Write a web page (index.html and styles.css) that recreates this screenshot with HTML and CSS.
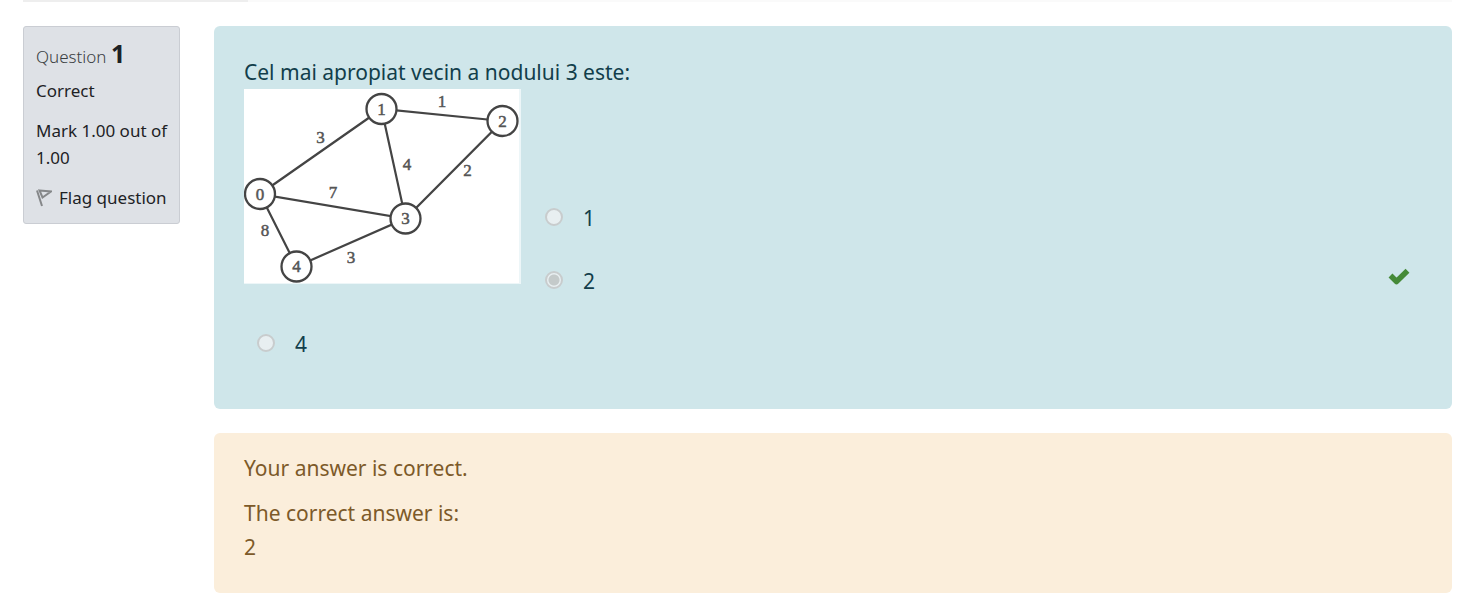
FILE: index.html
```html
<!DOCTYPE html>
<html lang="en">
<head>
<meta charset="utf-8">
<meta name="viewport" content="width=device-width, initial-scale=1">
<title>Quiz review</title>
<link rel="stylesheet" href="styles.css">
</head>
<body>
<div class="summary-edge"><div class="summary-label"></div></div>
<main class="question">
  <aside class="info">
    <h3 class="info-title">Question <span class="info-number">1</span></h3>
    <div class="info-state">Correct</div>
    <div class="info-grade">Mark 1.00 out of 1.00</div>
    <a class="info-flag" href="#flag">
      <svg class="flag-icon" viewBox="0 0 16 18" aria-hidden="true"><path d="M1 1.5 L6 17 M3.5 1.5 L15 2.5 L6.5 8.5 Z"/></svg>
      <span>Flag question</span>
    </a>
  </aside>
  <div class="content">
    <section class="formulation">
      <div class="prompt" id="prompt">Cel mai apropiat vecin a nodului 3 este:</div>
      <svg class="graph" viewBox="0 0 277 195" role="img" aria-label="Weighted graph with five nodes">
        <rect class="graph-edge-shade" width="277" height="195"/>
        <rect class="graph-paper" width="275" height="194"/>
        <g class="graph-edges">
          <path d="M16 105 L137.5 20 L258.5 32 L161.5 129.5 Z M137.5 20 L161.5 129.5 L52.5 177.5 L16 105"/>
        </g>
        <g class="graph-nodes">
          <circle cx="16" cy="105" r="15"/>
          <circle cx="137.5" cy="20" r="15"/>
          <circle cx="258.5" cy="32" r="15"/>
          <circle cx="161.5" cy="129.5" r="15"/>
          <circle cx="52.5" cy="177.5" r="15"/>
        </g>
        <g class="graph-text">
          <text x="16" y="111">0</text>
          <text x="137.5" y="26">1</text>
          <text x="258.5" y="38">2</text>
          <text x="161.5" y="135">3</text>
          <text x="52.5" y="183">4</text>
          <text x="76.5" y="54">3</text>
          <text x="198" y="18">1</text>
          <text x="163" y="81">4</text>
          <text x="223.5" y="87">2</text>
          <text x="89" y="109">7</text>
          <text x="21" y="147">8</text>
          <text x="107" y="174">3</text>
        </g>
      </svg>
      <div class="answers" role="radiogroup" aria-labelledby="prompt">
        <div class="answer"><input class="radio" type="radio" name="answer" id="a1" disabled><label for="a1">1</label></div>
        <div class="answer"><input class="radio" type="radio" name="answer" id="a2" checked disabled><label for="a2">2</label>
          <svg class="check" viewBox="0 0 22 18" role="img" aria-label="Correct"><path d="M2.5 7.5 L8.5 13.5 L19.5 2.8"/></svg>
        </div>
        <div class="answer"><input class="radio" type="radio" name="answer" id="a3" disabled><label for="a3">4</label></div>
      </div>
    </section>
    <section class="feedback">
      <div>Your answer is correct.</div>
      <div>The correct answer is:<br>2</div>
    </section>
  </div>
</main>
</body>
</html>
```
FILE: styles.css
```css
* { box-sizing: border-box; }

body {
  margin: 0;
  padding: 0 15px 0 23px;
  background: #fff;
  color: #1d2125;
  font-family: "Noto Sans", "Open Sans", sans-serif;
  font-size: 21px;
  line-height: 34px;
}

.summary-edge { background: #fafafa; }
.summary-label { width: 225px; height: 2px; background: #eee; }

.question {
  display: grid;
  grid-template-columns: 157px minmax(0, 1fr);
  align-items: start;
  gap: 34px;
  padding-top: 24px;
}

.info {
  padding: 13px 8px 12px 12px;
  border: 1px solid #cacdd3;
  border-radius: 3px;
  background: #dee1e6;
  font-size: 17px;
  line-height: 27px;
}
.info-title { margin: 0 0 7px; color: #3a3e42; font-size: 17px; font-weight: 300; line-height: 27px; }
.info-number { color: #1d2125; font-size: 25px; font-weight: 700; }
.info-state, .info-grade { margin-bottom: 13px; }
.info-flag {
  display: flex;
  align-items: center;
  gap: 7px;
  color: inherit;
  text-decoration: none;
  white-space: nowrap;
}
.flag-icon { flex: none; width: 16px; height: 18px; fill: none; stroke: #858789; stroke-width: 2; }

.content { display: grid; gap: 24px; }

.formulation {
  padding: 29px 30px 34px;
  border-radius: 6px;
  background: #cfe6ea;
  color: #123e4b;
}
.graph { float: left; width: 277px; height: 195px; margin-right: 11px; }
.graph-edge-shade { fill: #edf6f8; }
.graph-paper { fill: #fff; }
.graph-edges { fill: none; stroke: #444; stroke-width: 2.2; }
.graph-nodes { fill: #fff; stroke: #444; stroke-width: 2.3; }
.graph-text {
  fill: #555;
  stroke: #555;
  stroke-width: 0.5;
  font-family: "Liberation Serif", serif;
  font-size: 17px;
  text-anchor: middle;
}

.answers { padding-top: 97px; }
.answer {
  display: flex;
  align-items: center;
  gap: 20px;
  height: 63px;
  padding-left: 13px;
}
.radio {
  appearance: none;
  flex: none;
  width: 18px;
  height: 18px;
  margin: 0 0 2px;
  border: 2px solid #c8cccd;
  border-radius: 50%;
  background: #e8eff1;
}
.radio:checked { background: radial-gradient(circle, #c4caca 5px, #e8eff1 6px); }
.check { width: 22px; height: 18px; margin: 0 12px 8px auto; fill: none; stroke: #458a38; stroke-width: 5.5; stroke-linejoin: round; }

.feedback {
  display: grid;
  gap: 11px;
  padding: 18px 30px 29px;
  border-radius: 6px;
  background: #fbeedb;
  color: #7d5a29;
}
```
